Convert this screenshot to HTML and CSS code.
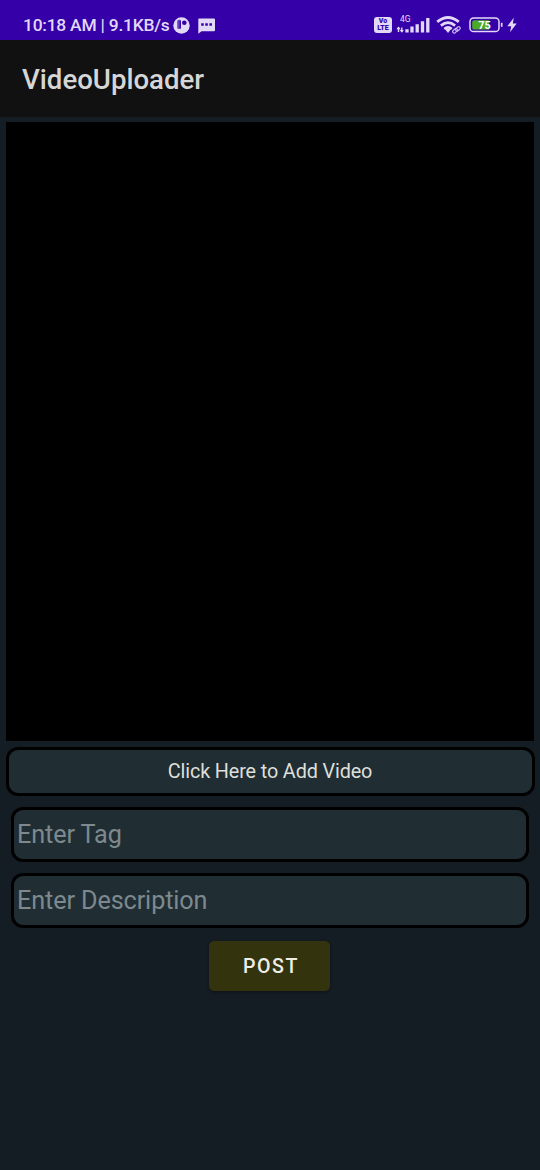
FILE: index.html
```html
<!DOCTYPE html>
<html lang="en">
<head>
<meta charset="utf-8">
<title>VideoUploader</title>
<link rel="stylesheet" href="styles.css">
</head>
<body>
<div class="screen">
  <div class="status">
    <span class="clock">10:18 AM | 9.1KB/s</span>
    <svg class="app-icon" width="17" height="17" viewBox="0 0 17 17"><circle cx="8.500" cy="8.500" r="8.200" fill="#e2d8f8"/><path d="M7.300 2.700H6Q4.200 2.700 4.200 4.200V10.800Q4.200 12 6 12H7.300z" fill="#3500a8" opacity=".7"/><path d="M7.300 3.500v8" stroke="#3500a8" stroke-width="1.300"/><circle cx="11.300" cy="5.800" r="2.300" fill="#3500a8"/></svg>
    <svg class="chat-icon" width="17" height="16" viewBox="0 0 17 16"><path d="M1 .5h15a1 1 0 0 1 1 1v10.700a1 1 0 0 1-1 1H3.500L.3 15.700V1.500A1 1 0 0 1 1 .5z" fill="#e2d8f8"/><path d="M3.200 5.200h2.500v2.500H3.200zM7.300 5.200h2.500v2.500H7.300zM11.400 5.200h2.500v2.500h-2.500z" fill="#3500a8"/></svg>
    <span class="spacer"></span>
    <span class="volte"><span>Vo</span><span>LTE</span></span>
    <span class="mobile">
      <span class="network">4G</span>
      <svg width="34" height="16" viewBox="0 0 34 16"><path d="M2.500 15V10M5.800 10.500V15" stroke="#e2d8f8" stroke-width="1.400"/><path d="M.4 12.200 2.500 9.500l2.100 2.700zM3.700 13l2.100 2.700L7.900 13z" fill="#e2d8f8"/><path d="M11 15.500v-3.200M16 15.500V9.600M21.200 15.500V7.200M26.500 15.500V4.200M31.800 15.500V1" stroke="#e2d8f8" stroke-width="3.300" stroke-linecap="butt"/></svg>
    </span>
    <svg class="wifi" width="26" height="18" viewBox="0 0 26 18"><path d="M1.200 5.900Q12 -2.900 22.800 5.900M4.900 9.600Q12 3.700 19.100 9.600M8.300 13Q12 9.900 15.700 13" stroke="#e2d8f8" stroke-width="2.700" fill="none"/><path d="M9.300 13.500Q12 11.500 14.700 13.500L12 17z" fill="#e2d8f8"/><g fill="none" stroke="#c5b3ee" stroke-width="1.200"><rect x="16.500" y="13.400" width="5.300" height="3" rx="1.500" transform="rotate(-42 19 15)"/><rect x="19.200" y="11.300" width="5.300" height="3" rx="1.500" transform="rotate(-42 22 12.800)"/></g></svg>
    <svg class="battery" width="35" height="16" viewBox="0 0 35 16"><rect x="1" y="1" width="29" height="13.600" rx="3.600" fill="none" stroke="#e2d8f8" stroke-width="1.500"/><path d="M5 3.200h15v9.300H5a1.800 1.800 0 0 1-1.800-1.800V5A1.800 1.800 0 0 1 5 3.200z" fill="#4caa27"/><path d="M32.700 5.800v4" stroke="#e2d8f8" stroke-width="1.700"/><text x="15.500" y="11.900" class="level">75</text></svg>
    <svg class="bolt" width="10" height="16" viewBox="0 0 10 16"><path d="M6.800.8.300 9.200h3.900L3 15.200 9.700 6.600H5.800z" fill="#e2d8f8"/></svg>
  </div>
  <header class="appbar"><h1>VideoUploader</h1></header>
  <main class="content">
    <div class="video"></div>
    <button class="add">Click Here to Add Video</button>
    <input class="field" type="text" placeholder="Enter Tag">
    <input class="field" type="text" placeholder="Enter Description">
    <button class="post">POST</button>
  </main>
</div>
</body>
</html>
```
FILE: styles.css
```css
* { box-sizing: border-box; }

body {
  margin: 0;
  background: #141c24;
  font-family: Roboto, sans-serif;
}

.screen {
  width: 540px;
  height: 1170px;
  display: flex;
  flex-direction: column;
  overflow: hidden;
}

.status {
  height: 40px;
  padding: 10px 23px 0;
  display: flex;
  align-items: center;
  background: #3500a8;
  color: #e2d8f8;
}

.status svg { display: block; flex: none; }

.clock {
  width: 146px;
  font-size: 17.4px;
  font-weight: 500;
  line-height: 20px;
  letter-spacing: -.22px;
  white-space: nowrap;
}

.app-icon { margin-left: 4px; }
.chat-icon { margin-left: 8px; margin-top: 2px; }
.spacer { flex: 1; }

.volte {
  width: 18px;
  height: 16px;
  padding-top: 1px;
  border-radius: 3px;
  background: #e2d8f8;
  color: #3500a8;
  font-size: 7px;
  font-weight: 900;
  line-height: 7px;
  display: flex;
  flex-direction: column;
  align-items: center;
}

.mobile {
  position: relative;
  margin-left: 4px;
}

.network {
  position: absolute;
  left: 4px;
  top: -3px;
  font-size: 8.5px;
  line-height: 10px;
}

.wifi { margin-left: 6px; }
.battery { margin-left: 7px; }
.bolt { margin-left: 3px; }

.level {
  fill: #fff;
  font-size: 11px;
  font-weight: 700;
  text-anchor: middle;
}

.appbar {
  height: 77px;
  padding: 0 22px;
  display: flex;
  align-items: center;
  background: #111;
}

h1 {
  margin: 3px 0 0;
  color: #d6d6d6;
  font-size: 27.6px;
  font-weight: 500;
  line-height: 32px;
}

.content {
  flex: 1;
  padding: 5.4px 5.5px 0;
  display: flex;
  flex-direction: column;
}

.video {
  height: 619px;
  margin-right: .2px;
  background: #000;
}

.add {
  height: 49px;
  margin-top: 5.6px;
  padding: 2px 0 0;
  border: 3px solid #000;
  border-radius: 12px;
  background: #202e34;
  color: #dedfd8;
  font: 400 19.8px/24px Roboto, sans-serif;
  letter-spacing: -.12px;
}

.field {
  height: 55px;
  margin: 11px 5.5px 0;
  padding: 1px 3px 0;
  border: 3px solid #000;
  border-radius: 12px;
  background: #202e34;
  color: #dedfd8;
  font: 400 25.2px/30px Roboto, sans-serif;
  letter-spacing: -.1px;
}

.field::placeholder { color: #7d898e; opacity: 1; }

.post {
  width: 121px;
  height: 50px;
  margin: 13px 1px 0 0;
  padding: 3px 0 0 3px;
  align-self: center;
  border: 0;
  border-radius: 5px;
  background: #33330d;
  color: #eeeee8;
  box-shadow: 0 1px 3px rgba(0, 0, 0, .35);
  font: 500 19.6px/24px Roboto, sans-serif;
  letter-spacing: 1.6px;
}
```
